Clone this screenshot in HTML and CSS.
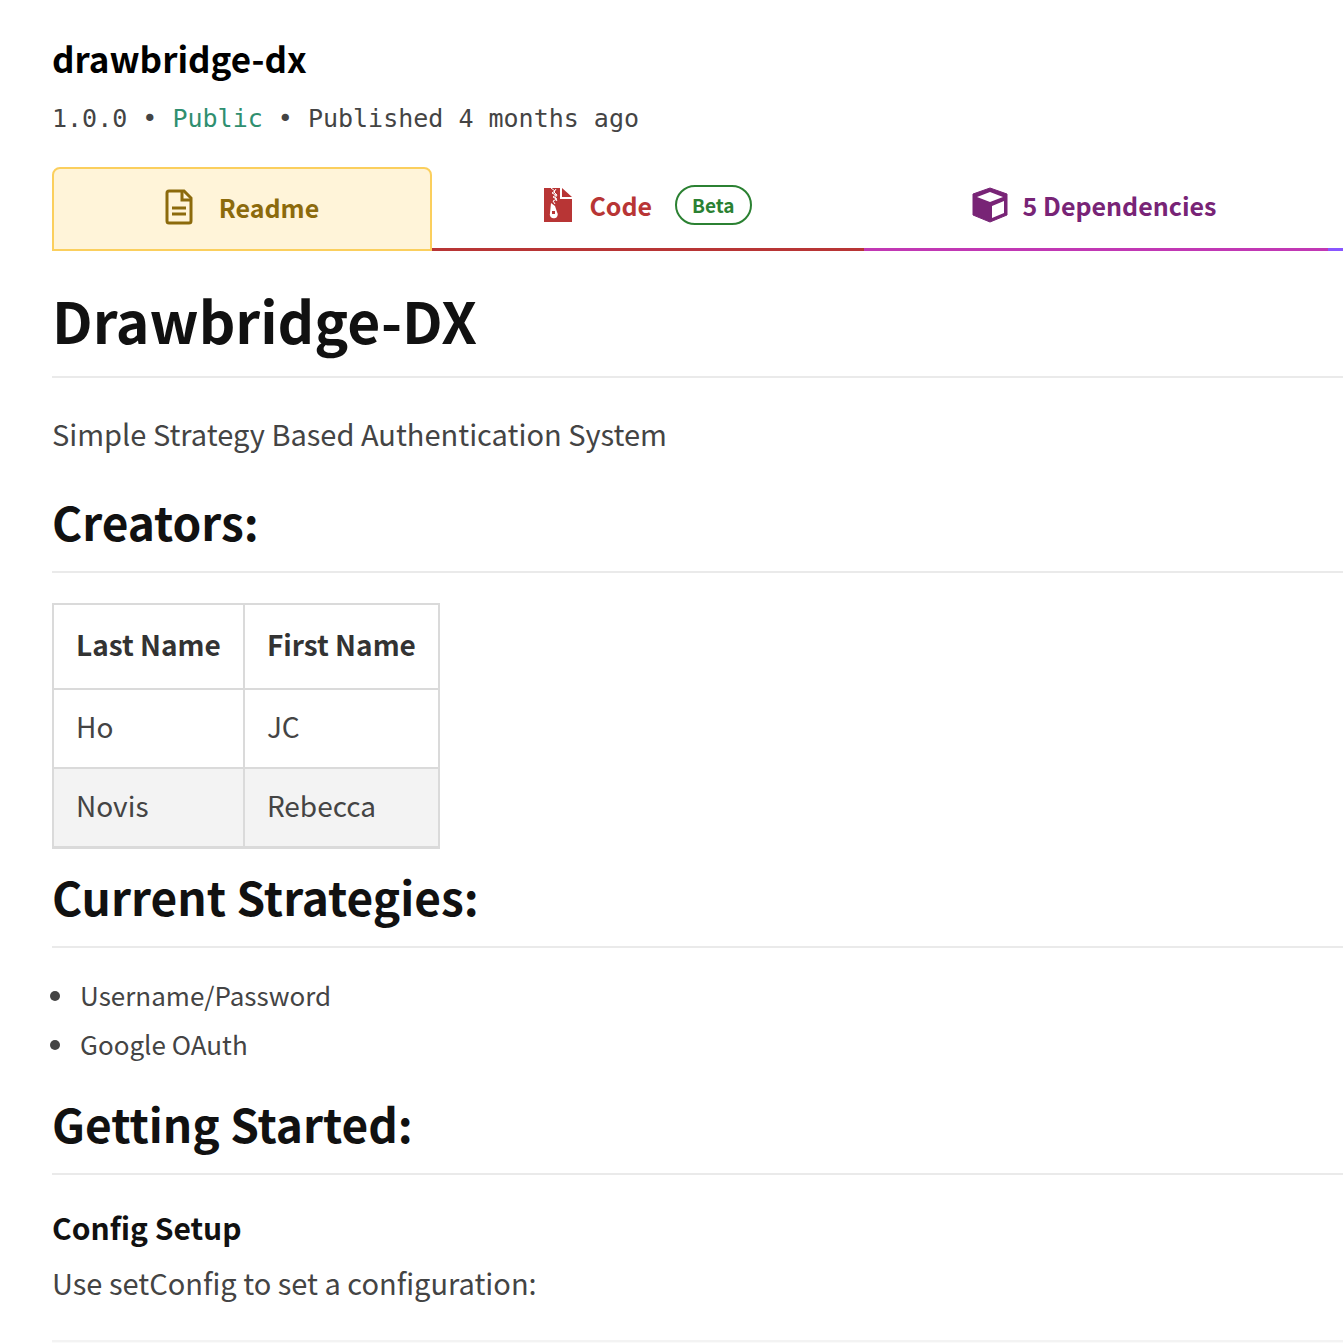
FILE: index.html
```html
<!DOCTYPE html>
<html lang="en">
<head>
  <meta charset="UTF-8">
  <meta name="viewport" content="width=device-width, initial-scale=1.0">
  <title>drawbridge-dx</title>
  <link rel="stylesheet" href="styles.css">
</head>
<body>
  <main class="package">
    <header class="package-header">
      <h1 class="package-name">drawbridge-dx</h1>
      <p class="package-meta">1.0.0 • <span class="public">Public</span> • Published 4 months ago</p>
    </header>

    <nav class="tabs">
      <a class="tab tab-readme" href="#readme">
        <svg class="icon" viewBox="0 0 28 36">
          <path d="M4 2h15l7 7v23a2 2 0 0 1-2 2H4a2 2 0 0 1-2-2V4a2 2 0 0 1 2-2z" fill="none" stroke="currentColor" stroke-width="3"/>
          <path d="M17 2v9h9M7 19h14M7 25h14" fill="none" stroke="currentColor" stroke-width="3"/>
        </svg>
        <span>Readme</span>
      </a>
      <a class="tab tab-code" href="#code">
        <svg class="icon" viewBox="0 0 28 36">
          <path d="M0 1h16v11h12v23H0z" fill="currentColor"/>
          <path d="M18 1l10 9H18z" fill="currentColor"/>
          <path d="M7 1l4 3-3 2 4 2-3 2 4 2-4 2 2 3M12 2l-2 3 3 3-2 3 2 3" fill="none" stroke="#fff" stroke-width="1"/>
          <path d="M7 16l4 3 2 6a4 4 0 1 1-7 1z" fill="#fff"/>
          <path d="M8 24h3v3H8z" fill="currentColor"/>
        </svg>
        <span>Code</span>
        <span class="badge">Beta</span>
      </a>
      <a class="tab tab-dependencies" href="#dependencies">
        <svg class="icon icon-cube" viewBox="0 0 36 36">
          <path d="M18 1l17 6v21l-17 7L1 28V7z" fill="currentColor" stroke="currentColor" stroke-linejoin="round"/>
          <path d="M18 5l13 5-13 5-13-5zM20 19l12-5v12l-12 5z" fill="#fff"/>
        </svg>
        <span>5 Dependencies</span>
      </a>
      <a class="tab tab-dependents" href="#dependents"></a>
    </nav>

    <article class="readme" id="readme">
      <h1>Drawbridge-DX</h1>
      <p class="intro">Simple Strategy Based Authentication System</p>

      <h2>Creators:</h2>
      <table>
        <thead>
          <tr><th>Last Name</th><th>First Name</th></tr>
        </thead>
        <tbody>
          <tr><td>Ho</td><td>JC</td></tr>
          <tr><td>Novis</td><td>Rebecca</td></tr>
        </tbody>
      </table>

      <h2 class="after-table">Current Strategies:</h2>
      <ul>
        <li>Username/Password</li>
        <li>Google OAuth</li>
      </ul>

      <h2 class="after-list">Getting Started:</h2>
      <h3>Config Setup</h3>
      <p>Use setConfig to set a configuration:</p>
      <pre></pre>
    </article>
  </main>
</body>
</html>
```
FILE: styles.css
```css
* {
  box-sizing: border-box;
}
body {
  margin: 0;
  overflow: hidden;
  background-color: #fff;
  color: #444;
  font-family: "Noto Sans CJK SC", "Noto Sans", sans-serif;
  font-size: 29px;
  line-height: 44px;
}
h1, h2, h3, p, ul, pre {
  margin: 0;
}
.package {
  padding: 34px 0 0 52px;
}
.package-name {
  color: #000;
  font-size: 35px;
  line-height: 48px;
  font-weight: 600;
}
.package-meta {
  margin-top: 21px;
  font-family: "DejaVu Sans Mono", monospace;
  font-size: 25px;
  line-height: 32px;
}
.public {
  color: #2f8f70;
}

/* tabs */
.tabs {
  display: grid;
  grid-template-columns: 380fr 432fr 464fr 15fr;
  height: 84px;
  margin-top: 32px;
}
.tab {
  display: flex;
  align-items: center;
  justify-content: center;
  border-bottom: 3px solid;
  padding-bottom: 6px;
  font-size: 25px;
  font-weight: 600;
  line-height: 36px;
  text-decoration: none;
}
.tab-readme {
  gap: 26px;
  padding-bottom: 4px;
  border: 2px solid #fbcf5d;
  border-radius: 8px 8px 0 0;
  background-color: #fff4d9;
  color: #8c6a0c;
}
.tab-code {
  gap: 17px;
  border-color: #b83535;
  color: #b83535;
}
.tab-dependencies {
  gap: 15px;
  padding-right: 4px;
  border-color: #c138b4;
  color: #782476;
}
.tab-dependents {
  border-color: #8956ff;
}
.icon {
  width: 28px;
  height: 36px;
}
.icon-cube {
  width: 36px;
}
.badge {
  margin-left: 6px;
  padding: 0 15px;
  border: 2px solid #2b8132;
  border-radius: 20px;
  color: #2b8132;
  font-size: 19px;
}

/* readme */
.readme h1,
.readme h2 {
  border-bottom: 2px solid #eaeaea;
  color: #111;
  font-weight: 600;
}
.readme h1 {
  margin-top: 32px;
  padding-bottom: 21px;
  font-size: 57px;
  line-height: 72px;
}
.readme h2 {
  margin-top: 36px;
  padding-bottom: 20px;
  font-size: 46px;
  line-height: 60px;
}
.readme h2.after-table {
  margin-top: 17px;
}
.readme h2.after-list {
  margin-top: 25px;
}
.readme h3 {
  margin-top: 30px;
  color: #111;
  font-size: 30px;
  line-height: 44px;
  font-weight: 600;
}
.intro {
  margin-top: 33px;
}
.readme h3 + p {
  margin-top: 11px;
}
table {
  margin-top: 30px;
  border-collapse: collapse;
  border: 2px solid #dadada;
  border-bottom-width: 3px;
}
th, td {
  padding: 15px 22px 19px;
  border: 2px solid #dadada;
  font-size: 28px;
  line-height: 43px;
  text-align: left;
}
th {
  padding: 18px 22px 22px;
  color: #333;
  font-weight: 600;
}
tbody tr:nth-child(even) {
  background-color: #f3f3f3;
}
ul {
  margin-top: 22px;
  padding-left: 25px;
}
li {
  padding-left: 3px;
  font-size: 26px;
  line-height: 49px;
}
pre {
  height: 60px;
  margin-top: 36px;
  border-top: 2px solid #f3f3f3;
  background-color: #fafafa;
}
```
